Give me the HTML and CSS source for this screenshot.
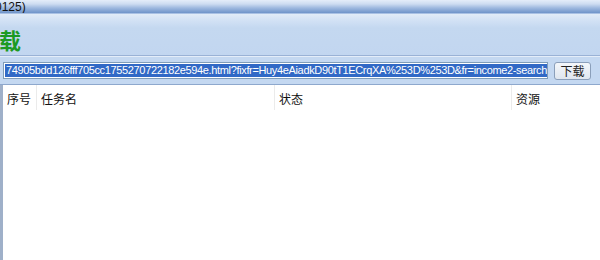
FILE: index.html
```html
<!DOCTYPE html>
<html>
<head>
<meta charset="utf-8">
<link rel="stylesheet" href="styles.css">
</head>
<body>
<div class="window">
  <div class="titlebar"><span class="title">(0125)</span></div>
  <div class="header"><span class="big">载</span></div>
  <div class="toolbar">
    <div class="urlbox"><span class="sel">74905bdd126fff705cc1755270722182e594e.html?fixfr=Huy4eAiadkD90tT1ECrqXA%253D%253D&amp;fr=income2-search</span></div>
    <button class="btn">下载</button>
  </div>
  <div class="list">
    <div class="listhead">
      <div class="col c1">序号</div>
      <div class="col c2">任务名</div>
      <div class="col c3">状态</div>
      <div class="col c4">资源</div>
    </div>
  </div>
</div>
</body>
</html>
```
FILE: styles.css
```css
html, body {
  margin: 0;
  padding: 0;
  background: #ffffff;
}
.window {
  width: 600px;
  height: 260px;
  overflow: hidden;
  display: flex;
  flex-direction: column;
  font-family: "Noto Sans CJK SC", "Liberation Sans", sans-serif;
  font-size: 12px;
}
.titlebar {
  height: 13px;
  flex: none;
  background: linear-gradient(#e4edf9 0px, #cddcf1 4px, #9db8df 8px, #6f94c9 13px);
  border-bottom: 1px solid #a9c1e4;
  overflow: hidden;
  line-height: 11px;
}
.title {
  display: inline-block;
  margin-left: -9px;
  font-family: "Liberation Sans", sans-serif;
  font-size: 12px;
  color: #111;
}
.header {
  height: 42px;
  flex: none;
  background: linear-gradient(#e2ecf8 0px, #d3e2f5 6px, #c4d8f0 14px, #c2d6f0 42px);
  border-bottom: 1px solid #9ab2d6;
  display: flex;
  align-items: center;
  padding-top: 9px;
  box-sizing: border-box;
}
.big {
  color: #1d9a22;
  font-weight: bold;
  font-size: 22px;
  margin-left: -1px;
  line-height: 22px;
}
.toolbar {
  height: 29px;
  flex: none;
  background: #c4d8f1;
  border-top: 1px solid #e4edf9;
  border-bottom: 1px solid #8ea8cd;
  box-sizing: border-box;
  display: flex;
  align-items: center;
  padding-left: 3px;
  gap: 6px;
}
.urlbox {
  width: 545px;
  height: 17px;
  box-sizing: border-box;
  background: #fff;
  border: 1px solid #7f9db9;
  padding: 1px 1px;
  display: flex;
  align-items: center;
  overflow: hidden;
  white-space: nowrap;
}
.sel {
  background: #3169c6;
  color: #fff;
  font-family: "Liberation Sans", sans-serif;
  font-size: 11px;
  letter-spacing: -0.35px;
  line-height: 13px;
  padding: 0 1px;
}
.btn {
  width: 37px;
  height: 18px;
  padding: 0;
  margin: 0;
  border: 1px solid #8b9fba;
  border-radius: 3px;
  background: linear-gradient(#f4f7fb, #dfe6ef);
  font-family: "Noto Sans CJK SC", sans-serif;
  font-size: 12px;
  line-height: 16px;
  color: #222;
}
.list {
  flex: 1;
  border-left: 3px solid #9fb0c9;
  background: #fff;
}
.listhead {
  display: flex;
  height: 25px;
  align-items: stretch;
}
.col {
  display: flex;
  align-items: center;
  padding-left: 4px;
  box-sizing: border-box;
  color: #111;
  border-right: 1px solid #ebebeb;
  line-height: 14px;
  padding-top: 3px;
}
.c1 { width: 34px; }
.c2 { width: 238px; }
.c3 { width: 237px; }
.c4 { flex: 1; border-right: none; }
```
